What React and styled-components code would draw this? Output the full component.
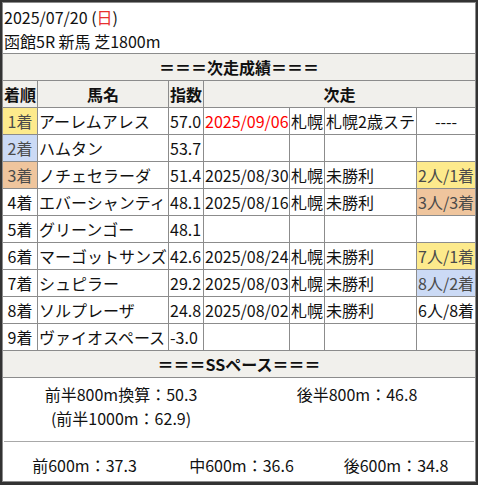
import React from "react";
import styled, { createGlobalStyle } from "styled-components";

const Global = createGlobalStyle`
  html, body { margin: 0; padding: 0; background: #333; }
  body { font-family: "Noto Sans CJK JP", "Noto Sans", sans-serif; font-size: 16px; color: #111; }
`;

const Page = styled.div`
  padding: 2px 2px 3px 2px;
`;

const Box = styled.div`
  border: 1px solid #8c8c8c;
  background: #fff;
`;

const Header = styled.div`
  padding: 2px 1px 0;
  line-height: 24px;
`;

const Line = styled.div`
  height: 24px;
`;

const Red = styled.span`
  color: #e8312f;
`;

const Grid = styled.div`
  display: grid;
  grid-template-columns: 34px 130px 34px 85px 34px 91px 58px;
  grid-auto-rows: 26px;
  gap: 1px;
  background: #8c8c8c;
  border-top: 1px solid #8c8c8c;
  border-bottom: 1px solid #8c8c8c;
`;

const medal = {
  1: "#fdea8c",
  2: "#cbdaf5",
  3: "#efc59d",
};

const Cell = styled.div`
  background: ${(p) => (p.$rank ? medal[p.$rank] : "#fff")};
  color: ${(p) => (p.$rank ? "#4a4a4a" : p.$red ? "#f00" : "#111")};
  line-height: 24px;
  padding: 1px;
  white-space: nowrap;
  overflow: hidden;
  text-align: ${(p) => (p.$center ? "center" : "left")};
`;

const Title = styled.div`
  grid-column: 1 / -1;
  background: #f1f0ec;
  font-weight: 700;
  text-align: center;
  line-height: 24px;
  padding: 1px;
`;

const HeadCell = styled.div`
  grid-column: ${(p) => p.$span || "auto"};
  background: #f1f0ec;
  font-weight: 700;
  text-align: center;
  line-height: 24px;
  padding: 1px;
`;

const Pace = styled.div`
  display: grid;
  grid-template-columns: 1fr 1fr;
  padding: 4px 0 11px;
  line-height: 24px;
  text-align: center;
`;

const Divider = styled.div`
  height: 1px;
  margin: 0 1px;
  background: #a8a8a8;
`;

const Splits = styled.div`
  display: grid;
  grid-template-columns: 163px 151px 1fr;
  padding: 11px 0 4px;
  line-height: 24px;
  text-align: center;
`;

const rows = [
  { r: "1着", name: "アーレムアレス", idx: "57.0", date: "2025/09/06", red: true, place: "札幌", race: "札幌2歳ステ", res: "----", rank: 1 },
  { r: "2着", name: "ハムタン", idx: "53.7", rank: 2 },
  { r: "3着", name: "ノチェセラーダ", idx: "51.4", date: "2025/08/30", place: "札幌", race: "未勝利", res: "2人/1着", rank: 3, resRank: 1 },
  { r: "4着", name: "エバーシャンティ", idx: "48.1", date: "2025/08/16", place: "札幌", race: "未勝利", res: "3人/3着", resRank: 3 },
  { r: "5着", name: "グリーンゴー", idx: "48.1" },
  { r: "6着", name: "マーゴットサンズ", idx: "42.6", date: "2025/08/24", place: "札幌", race: "未勝利", res: "7人/1着", resRank: 1 },
  { r: "7着", name: "シュピラー", idx: "29.2", date: "2025/08/03", place: "札幌", race: "未勝利", res: "8人/2着", resRank: 2 },
  { r: "8着", name: "ソルプレーザ", idx: "24.8", date: "2025/08/02", place: "札幌", race: "未勝利", res: "6人/8着" },
  { r: "9着", name: "ヴァイオスペース", idx: "-3.0" },
];

export default function App() {
  return (
    <Page>
      <Global />
      <Box>
        <Header>
          <Line>
            2025/07/20 (<Red>日</Red>)
          </Line>
          <Line>函館5R 新馬 芝1800m</Line>
        </Header>
        <Grid>
          <Title>＝＝＝次走成績＝＝＝</Title>
          <HeadCell>着順</HeadCell>
          <HeadCell>馬名</HeadCell>
          <HeadCell>指数</HeadCell>
          <HeadCell $span="span 4">次走</HeadCell>
          {rows.map((row) => (
            <React.Fragment key={row.r}>
              <Cell $center $rank={row.rank}>{row.r}</Cell>
              <Cell>{row.name}</Cell>
              <Cell>{row.idx}</Cell>
              <Cell $red={row.red}>{row.date || ""}</Cell>
              <Cell>{row.place || ""}</Cell>
              <Cell>{row.race || ""}</Cell>
              <Cell $center $rank={row.resRank}>{row.res || ""}</Cell>
            </React.Fragment>
          ))}
          <Title>＝＝＝SSペース＝＝＝</Title>
        </Grid>
        <Pace>
          <div>
            <div>前半800m換算：50.3</div>
            <div>(前半1000m：62.9)</div>
          </div>
          <div>後半800m：46.8</div>
        </Pace>
        <Divider />
        <Splits>
          <div>前600m：37.3</div>
          <div>中600m：36.6</div>
          <div>後600m：34.8</div>
        </Splits>
      </Box>
    </Page>
  );
}
